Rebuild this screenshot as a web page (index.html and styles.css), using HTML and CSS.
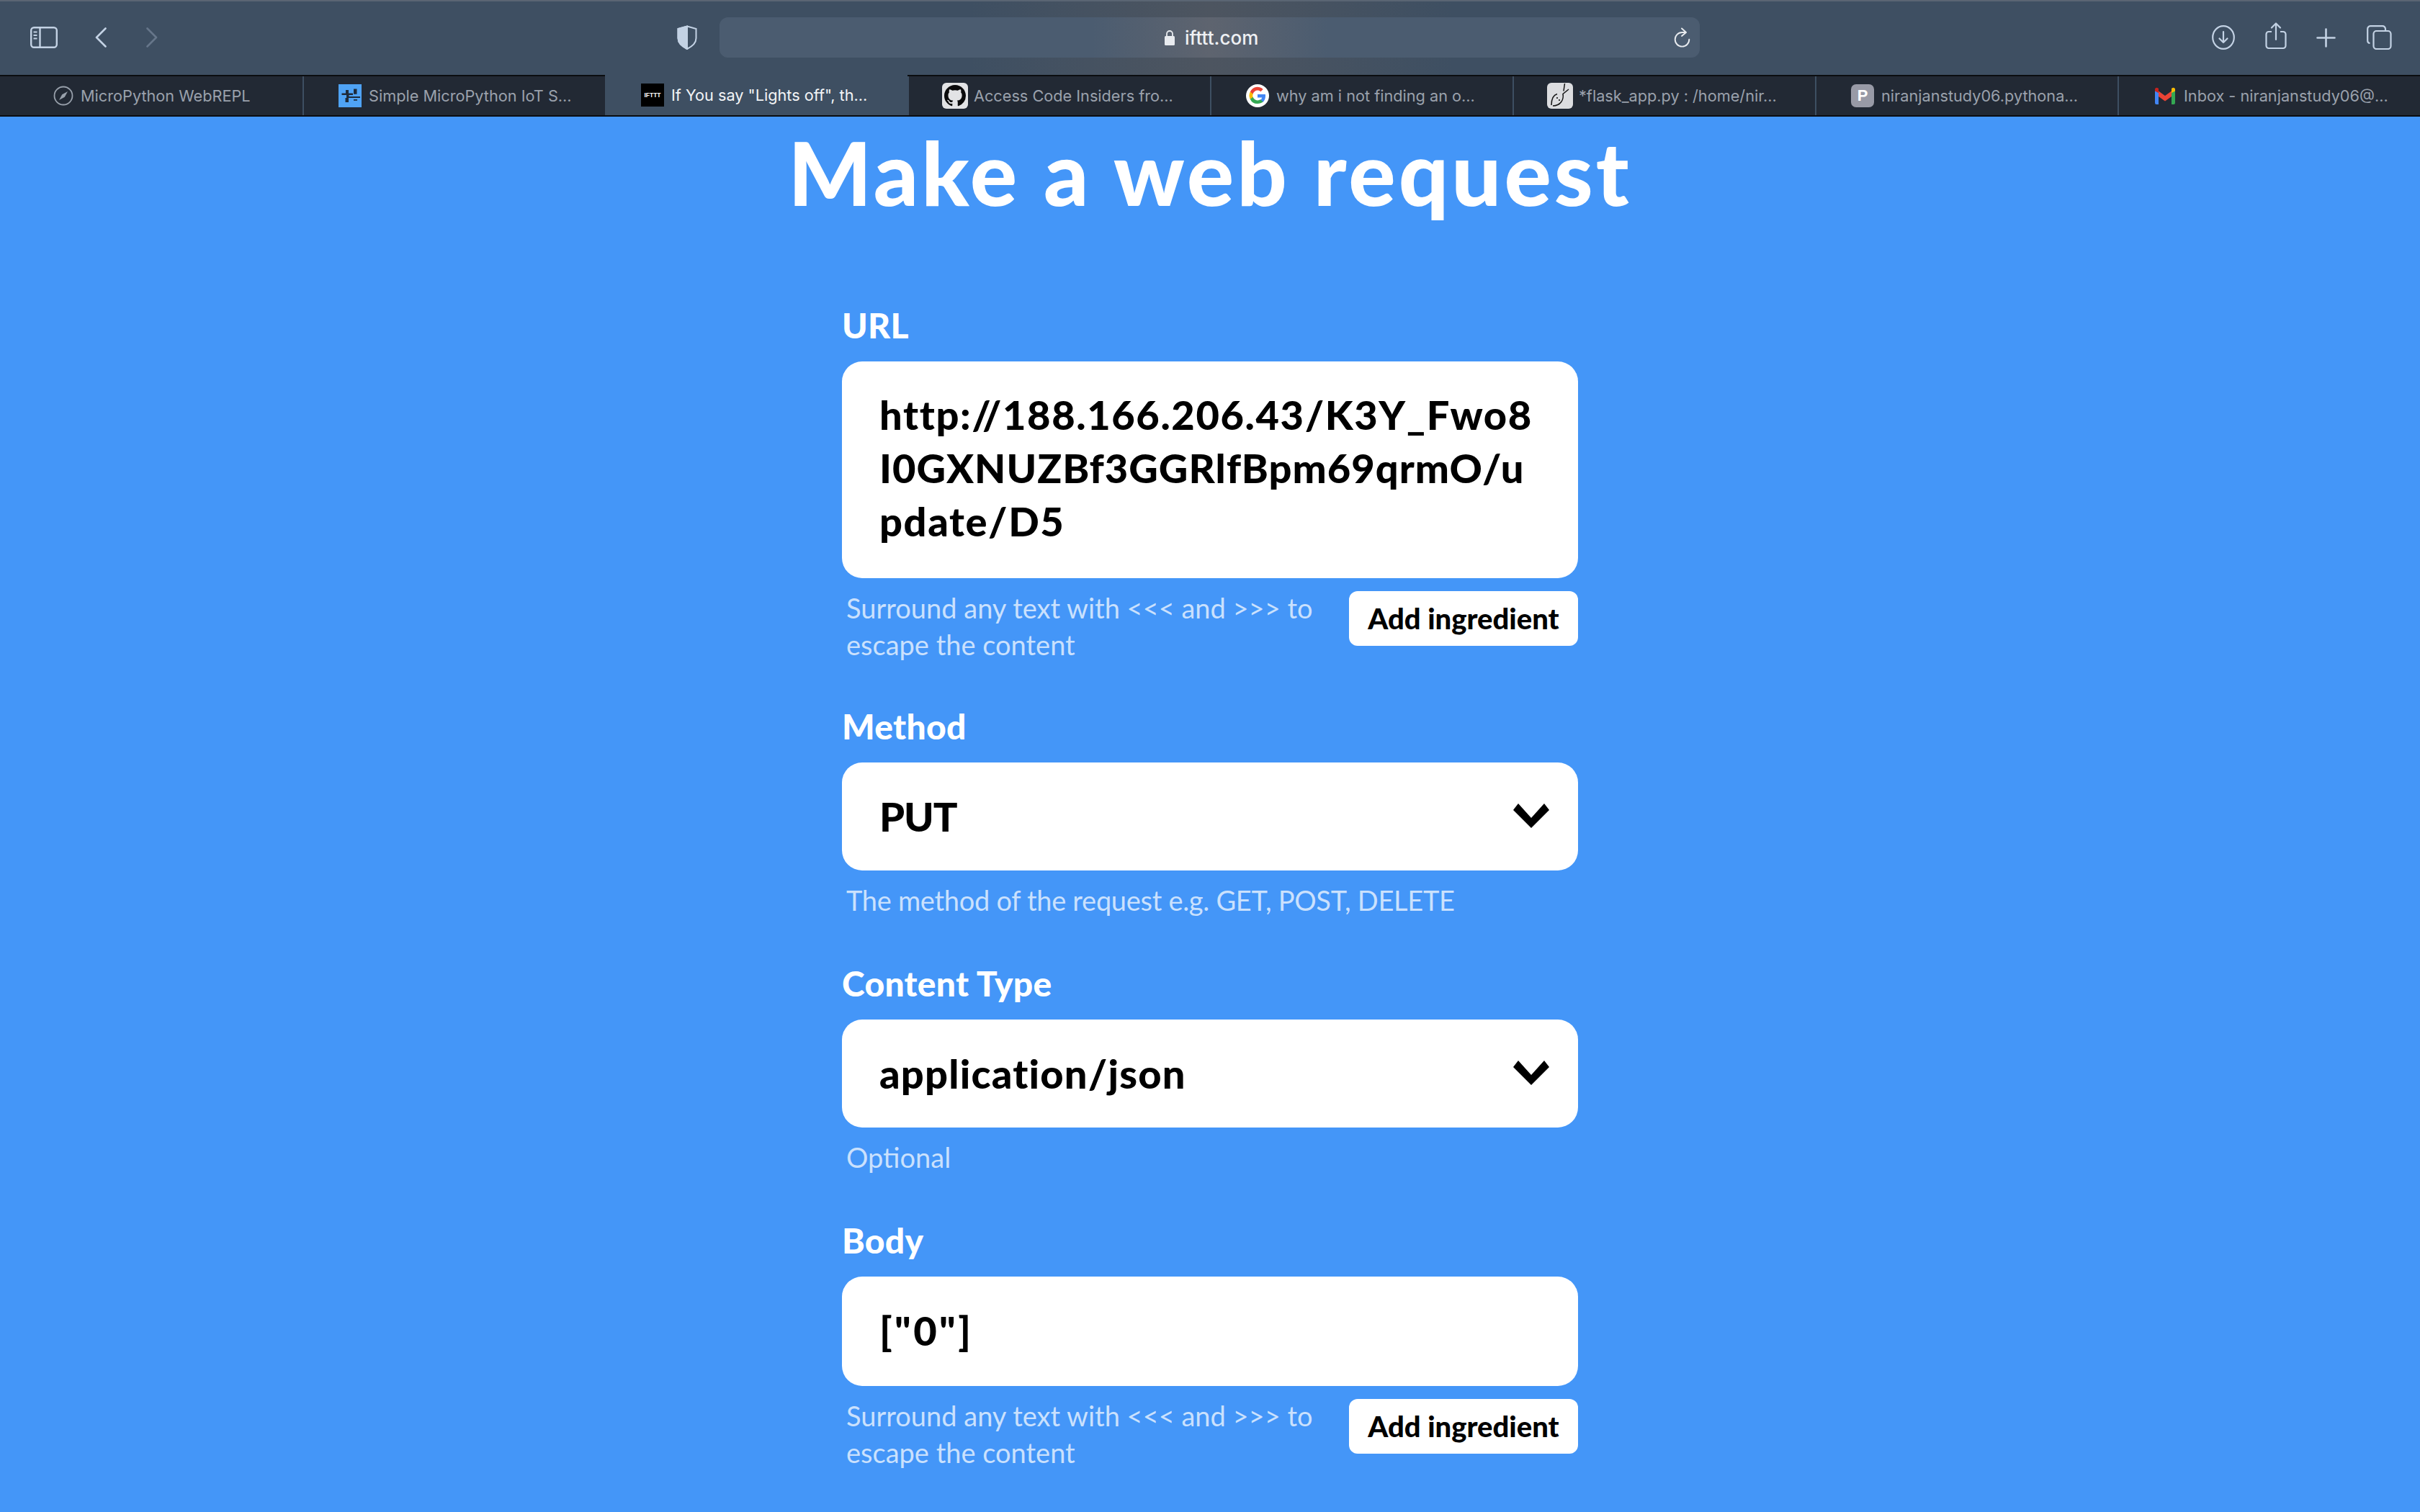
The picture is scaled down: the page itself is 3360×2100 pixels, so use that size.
FILE: index.html

```html
<!DOCTYPE html>
<html lang="en">
<head>
  <meta charset="UTF-8" />
  <title>Make a web request</title>
  <link rel="stylesheet" href="styles.css">
</head>
<body>
  <header class="toolbar">
    <svg class="icon sidebar-icon" viewBox="0 0 38 30" fill="none" stroke="#c3d2e4" stroke-width="2.4">
      <rect x="1.2" y="1.2" width="35.6" height="27.6" rx="4"/>
      <path d="M13.5 1.2v27.6"/>
      <path d="M4.5 7.5h5M4.5 12h5M4.5 16.5h5" stroke-width="2"/>
    </svg>
    <svg class="icon back-icon" viewBox="0 0 16 28" fill="none" stroke="#c3d2e4" stroke-width="2.6" stroke-linecap="round" stroke-linejoin="round">
      <path d="M14.5 1.5 2 14l12.500 12.500"/>
    </svg>
    <svg class="icon forward-icon" viewBox="0 0 16 28" fill="none" stroke="#66768a" stroke-width="2.6" stroke-linecap="round" stroke-linejoin="round">
      <path d="M1.500 1.500 14 14 1.500 26.500"/>
    </svg>
    <svg class="icon shield-icon" viewBox="0 0 28 34" stroke="#c3d2e4" stroke-width="2">
      <path d="M14 1.500 26.500 5v13c0 7-5.500 11.500-12.500 15C7 29.500 1.500 25 1.500 18V5z" fill="none"/>
      <path d="M14 1.500V33C7 29.500 1.500 25 1.500 18V5z" fill="#c3d2e4"/>
    </svg>
    <div class="address">
      <div class="address-center">
        <svg class="icon lock-icon" viewBox="0 0 14 22">
          <path d="M3 10V6a4 4 0 0 1 8 0v4" fill="none" stroke="#e8ebef" stroke-width="1.800"/>
          <rect x="0" y="9" width="14" height="13" rx="1.500" fill="#e8ebef"/>
        </svg>
        <span class="domain">ifttt.com</span>
      </div>
      <svg class="icon reload-icon" viewBox="0 0 23 28" fill="none" stroke="#e8ebef" stroke-width="1.900" stroke-linecap="round" stroke-linejoin="round">
        <path d="M16.500 7H11.500A9.800 9.800 0 1 0 21.300 16.800"/>
        <path d="M11 1.500 17 7l-6 5"/>
      </svg>
    </div>
    <div class="toolbar-right">
      <svg class="icon download-icon" viewBox="0 0 32 34" fill="none" stroke="#c3d2e4" stroke-width="2.200">
        <ellipse cx="16" cy="17" rx="14.800" ry="15.800"/>
        <path d="M16 9v15M10.500 18.500 16 24l5.500-5.500" stroke-linecap="round" stroke-linejoin="round"/>
      </svg>
      <svg class="icon share-icon" viewBox="0 0 30 38" fill="none" stroke="#c3d2e4" stroke-width="2.200">
        <path d="M9 13H5a3.500 3.500 0 0 0-3.500 3.500v16A3.500 3.500 0 0 0 5 36h20a3.500 3.500 0 0 0 3.500-3.500v-16A3.500 3.500 0 0 0 25 13h-4"/>
        <path d="M15 24V2M9 7.500 15 1.500l6 6" stroke-linecap="round" stroke-linejoin="round"/>
      </svg>
      <svg class="icon plus-icon" viewBox="0 0 27 27" fill="none" stroke="#c3d2e4" stroke-width="2.600" stroke-linecap="round">
        <path d="M13.500 1.500v24M1.500 13.500h24"/>
      </svg>
      <svg class="icon tabs-icon" viewBox="0 0 35 34" fill="none" stroke="#c3d2e4" stroke-width="2.200">
        <rect x="9.500" y="8" width="24" height="25" rx="4"/>
        <path d="M4.500 25A3.500 3.500 0 0 1 1.200 21.500v-16A4 4 0 0 1 5 1.200h17a4 4 0 0 1 4 4V8"/>
      </svg>
    </div>
  </header>

  <nav class="tabs">
    <div class="tab tab-first">
      <svg class="favicon compass" viewBox="0 0 28 28" fill="none" stroke="#98a0ab" stroke-width="1.800">
        <circle cx="14" cy="14" r="12.500"/>
        <path d="M20 8 15.800 15.800 8 20 12.200 12.200z" fill="#98a0ab" stroke="none"/>
      </svg>
      <span>MicroPython WebREPL</span>
    </div>
    <div class="tab">
      <svg class="favicon" viewBox="0 0 32 32">
        <rect width="32" height="32" fill="#4fa3f5"/>
        <path d="M4.500 12.400H20V15H14.500v2H30v2H14v6H9.500v-6H11v-4H4.500zM10 8h4v4.400h-4zM21 6.500h4.500v7.200H21zM21 21h5v1.700h-5z" fill="#1e2b3a"/>
      </svg>
      <span>Simple MicroPython IoT S...</span>
    </div>
    <div class="tab tab-active">
      <div class="favicon ifttt-logo">IFTTT</div>
      <span>If You say "Lights off", th...</span>
    </div>
    <div class="tab">
      <svg class="favicon favicon-tall" viewBox="0 0 36 36">
        <rect width="36" height="36" rx="6" fill="#e2e3e5"/>
        <path transform="translate(3 3) scale(1.875)" d="M8 0C3.580 0 0 3.580 0 8c0 3.540 2.290 6.530 5.470 7.590.4.070.55-.17.55-.38 0-.19-.01-.82-.01-1.490-2.010.37-2.530-.49-2.690-.94-.09-.23-.48-.94-.82-1.130-.28-.15-.68-.52-.01-.53.63-.01 1.080.58 1.230.82.720 1.210 1.870.870 2.330.660.070-.520.280-.870.510-1.070-1.780-.2-3.640-.890-3.640-3.950 0-.870.310-1.590.820-2.150-.080-.2-.360-1.020.080-2.120 0 0 .670-.210 2.200.820.640-.180 1.320-.270 2-.270s1.360.090 2 .270c1.530-1.040 2.200-.820 2.200-.820.440 1.100.160 1.920.080 2.120.510.560.820 1.270.820 2.150 0 3.070-1.870 3.750-3.650 3.950.290.250.540.730.540 1.480 0 1.070-.010 1.930-.010 2.200 0 .210.150.460.550.380A8.010 8.010 0 0 0 16 8c0-4.420-3.580-8-8-8z" fill="#0b0b0c"/>
      </svg>
      <span>Access Code Insiders fro...</span>
    </div>
    <div class="tab">
      <svg class="favicon" viewBox="0 0 32 32">
        <circle cx="16" cy="16" r="16" fill="#fff"/>
        <path d="M27 16.300c0-.8-.1-1.600-.2-2.300H16v4.400h6.200a5.300 5.300 0 0 1-2.300 3.400v2.900h3.700c2.200-2 3.400-5 3.400-8.400z" fill="#4285f4"/>
        <path d="M16 27c3.100 0 5.700-1 7.600-2.800l-3.700-2.900c-1 .7-2.300 1.100-3.900 1.100-3 0-5.500-2-6.400-4.700H5.800v3A11 11 0 0 0 16 27z" fill="#34a853"/>
        <path d="M9.600 17.700a6.600 6.600 0 0 1 0-4.200v-3H5.800a11 11 0 0 0 0 10.200z" fill="#fbbc05"/>
        <path d="M16 8.600c1.700 0 3.200.6 4.400 1.700l3.300-3.300A11 11 0 0 0 5.800 10.500l3.800 3c.9-2.800 3.400-4.900 6.400-4.900z" fill="#ea4335"/>
      </svg>
      <span>why am i not finding an o...</span>
    </div>
    <div class="tab">
      <svg class="favicon favicon-tall" viewBox="0 0 36 36">
        <rect width="36" height="36" rx="6" fill="#dcdde0"/>
        <path d="M24.500 1 23 11.500M30 9 22 15.500C23.500 23 19 32 8 32M14 15.500C9 17 6 23 6 31" fill="none" stroke="#151515" stroke-width="1.500"/>
        <circle cx="14" cy="21" r="1.100" fill="#151515"/>
        <circle cx="17" cy="24" r="1.100" fill="#151515"/>
      </svg>
      <span>*flask_app.py : /home/nir...</span>
    </div>
    <div class="tab">
      <div class="favicon p-logo">P</div>
      <span>niranjanstudy06.pythona...</span>
    </div>
    <div class="tab">
      <svg class="favicon" viewBox="0 0 32 32">
        <path d="M2 28V8l5 3.500V28H4a2 2 0 0 1-2-2z" fill="#4285f4"/>
        <path d="M30 28V8l-5 3.500V28h3a2 2 0 0 0 2-2z" fill="#34a853"/>
        <path d="M7 17V9.500L16 16l9-6.500V17l-9 6.500z" fill="#ea4335"/>
        <path d="M2 9.500V7c0-2 2.500-3 4-1.800L7 6v6z" fill="#c5221f"/>
        <path d="M30 9.500V7c0-2-2.500-3-4-1.800L25 6v6z" fill="#fbbc05"/>
      </svg>
      <span>Inbox - niranjanstudy06@...</span>
    </div>
  </nav>

  <main class="page">
    <h1>Make a web request</h1>

    <section class="field">
      <label>URL</label>
      <div class="box box-url">http://188.166.206.43/K3Y_Fwo8<br><span class="url-caps">I0GXNUZBf3GGRlfBpm69qrmO/u</span><br>pdate/D5</div>
      <div class="hint-row">
        <p class="hint">Surround any text with &lt;&lt;&lt; and &gt;&gt;&gt; to<br>escape the content</p>
        <button class="add-btn">Add ingredient</button>
      </div>
    </section>

    <section class="field field-wide">
      <label>Method</label>
      <div class="box box-select">
        <span class="value-caps">PUT</span>
        <svg class="chevron" viewBox="0 0 50 34"><path d="M0 9 7 0 25 20 43 0 50 9 25 34z"/></svg>
      </div>
      <p class="hint hint-single hint-caps">The method of the request e.g. GET, POST, DELETE</p>
    </section>

    <section class="field field-wide">
      <label>Content Type</label>
      <div class="box box-select">
        <span>application/json</span>
        <svg class="chevron" viewBox="0 0 50 34"><path d="M0 9 7 0 25 20 43 0 50 9 25 34z"/></svg>
      </div>
      <p class="hint hint-single">Optional</p>
    </section>

    <section class="field">
      <label>Body</label>
      <div class="box box-body">["0"]</div>
      <div class="hint-row">
        <p class="hint">Surround any text with &lt;&lt;&lt; and &gt;&gt;&gt; to<br>escape the content</p>
        <button class="add-btn">Add ingredient</button>
      </div>
    </section>
  </main>
</body>
</html>
```

FILE: styles.css

```css
:root {
  --blue: #4496f8;
  --toolbar: #3e4f62;
  --tabbar: #222934;
}
* {
  box-sizing: border-box;
}
html, body {
  margin: 0;
  height: 2100px;
  overflow: hidden;
}
body {
  background: var(--blue);
  font-family: "Lato", "Noto Sans", sans-serif;
}

/* browser chrome */
.toolbar {
  height: 104px;
  display: flex;
  align-items: center;
  padding-bottom: 2px;
  border-top: 2px solid #5a6573;
  background: linear-gradient(90deg, var(--toolbar) 40%, #4d5560 50%, var(--toolbar) 60%);
}
.icon {
  display: block;
  flex: none;
}
.sidebar-icon {
  width: 38px;
  height: 30px;
  margin-left: 42px;
}
.back-icon {
  width: 16px;
  height: 28px;
  margin-left: 52px;
}
.forward-icon {
  width: 16px;
  height: 28px;
  margin-left: 55px;
}
.shield-icon {
  width: 28px;
  height: 34px;
  margin-left: 721px;
}
.address {
  width: 1361px;
  height: 56px;
  margin-left: 31px;
  border-radius: 12px;
  background: linear-gradient(90deg, #4b5c70 38%, #5e646f 50%, #4b5c70 62%);
  display: flex;
  align-items: center;
}
.address-center {
  margin-left: 618px;
  display: flex;
  align-items: center;
  gap: 14px;
}
.lock-icon {
  width: 14px;
  height: 22px;
}
.domain {
  font-family: "Inter", sans-serif;
  font-size: 26px;
  font-weight: 500;
  color: #eef0f3;
}
.reload-icon {
  width: 23px;
  height: 28px;
  margin-left: auto;
  margin-right: 13px;
}
.toolbar-right {
  margin-left: 711px;
  display: flex;
  align-items: center;
}
.download-icon {
  width: 32px;
  height: 34px;
}
.share-icon {
  width: 30px;
  height: 38px;
  margin-left: 42px;
  margin-top: -4px;
}
.plus-icon {
  width: 27px;
  height: 27px;
  margin-left: 41px;
}
.tabs-icon {
  width: 35px;
  height: 34px;
  margin-left: 43px;
}

.tabs {
  height: 58px;
  display: grid;
  grid-template-columns: repeat(8, 420px);
  border-top: 2px solid #0b0d10;
  border-bottom: 2px solid #0b0d10;
  background: var(--tabbar);
}
.tab {
  display: flex;
  align-items: center;
  gap: 10px;
  padding-left: 48px;
  border-left: 2px solid #3e4f62;
  font-family: "Inter", sans-serif;
  font-size: 21.7px;
  color: #9aa1ac;
  white-space: nowrap;
}
.tab-first {
  padding-left: 74px;
  border-left: none;
}
.tab-active {
  background: var(--toolbar);
  color: #f2f4f6;
  margin-top: -2px;
}
.favicon {
  width: 32px;
  height: 32px;
  flex: none;
}
.favicon-tall {
  width: 36px;
  height: 36px;
  margin-left: -2px;
  margin-right: -2px;
}
.compass {
  width: 28px;
  height: 28px;
}
.ifttt-logo {
  background: #000;
  color: #fff;
  font-family: "Liberation Sans", sans-serif;
  font-size: 8.5px;
  font-weight: 700;
  line-height: 32px;
  text-align: center;
}
.p-logo {
  background: #989aa6;
  border-radius: 7px;
  color: #fff;
  font-family: "Liberation Sans", sans-serif;
  font-size: 22px;
  font-weight: 700;
  line-height: 32px;
  text-align: center;
}

/* form */
.page {
  width: 1022px;
  margin: 0 auto;
}
h1 {
  margin: 0 -100px 100px;
  height: 160px;
  font-size: 122px;
  font-weight: 900;
  letter-spacing: 4px;
  line-height: 154px;
  text-align: center;
  color: #fff;
  white-space: nowrap;
}
.field {
  margin-bottom: 58px;
}
.field-wide {
  margin-bottom: 60px;
}
label {
  display: block;
  height: 60px;
  margin-bottom: 20px;
  font-size: 48px;
  font-weight: 900;
  letter-spacing: 0.3px;
  line-height: 60px;
  color: #fff;
}
.box {
  background: #fff;
  border-radius: 28px;
  padding: 0 40px 0 52px;
  font-size: 56px;
  font-weight: 900;
  color: #000;
  white-space: nowrap;
}
.box-url {
  height: 301px;
  padding-top: 37px;
  line-height: 74px;
  letter-spacing: 1.6px;
}
.url-caps {
  letter-spacing: 1px;
}
.box-select {
  height: 150px;
  display: flex;
  align-items: center;
  justify-content: space-between;
  padding-bottom: 2px;
  letter-spacing: 1.2px;
}
.value-caps {
  letter-spacing: -1px;
}
.box-body {
  height: 152px;
  line-height: 150px;
  letter-spacing: 3.4px;
}
.chevron {
  width: 50px;
  height: 34px;
  flex: none;
}
.hint {
  margin: 0 0 0 6px;
  font-size: 38px;
  line-height: 51px;
  color: rgba(255, 255, 255, 0.72);
  white-space: nowrap;
}
.hint-single {
  margin-top: 16px;
}
.hint-caps {
  letter-spacing: -0.3px;
}
.hint-row {
  display: flex;
  justify-content: space-between;
  align-items: flex-start;
  margin-top: 16px;
}
.add-btn {
  width: 318px;
  height: 76px;
  margin-top: 2px;
  border: none;
  border-radius: 12px;
  background: #fff;
  color: #000;
  font-family: "Lato", "Noto Sans", sans-serif;
  font-size: 40px;
  font-weight: 900;
}
```
